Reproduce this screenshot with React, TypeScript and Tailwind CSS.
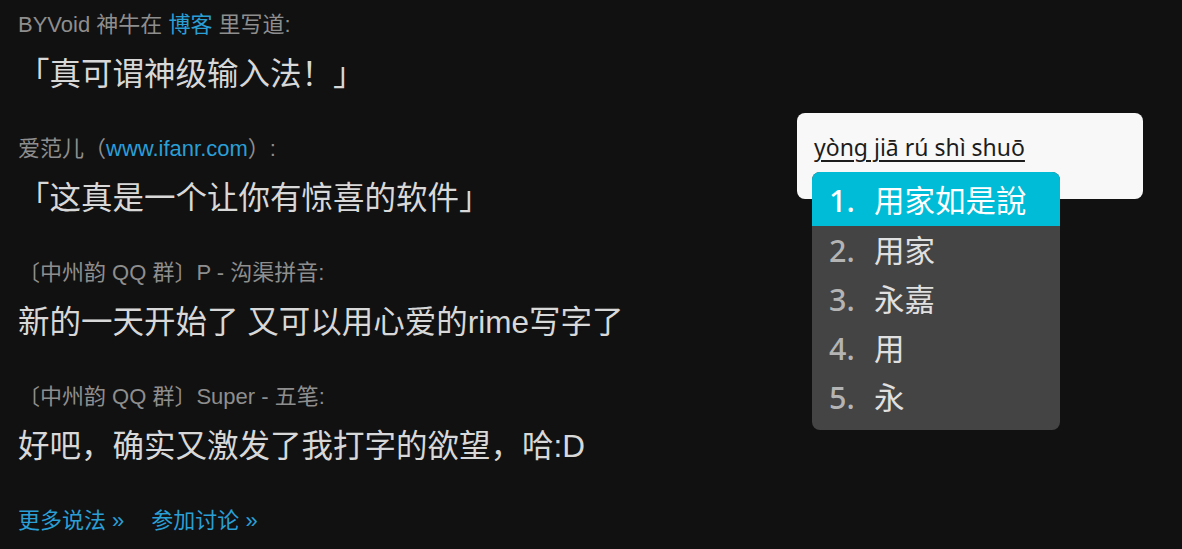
const quotes = [
  {
    meta: (
      <>
        BYVoid 神牛在 <span className="text-[#2a9fd6]">博客</span> 里写道:
      </>
    ),
    text: "「真可谓神级输入法！」",
  },
  {
    meta: (
      <>
        爱范儿（<span className="text-[#2a9fd6]">www.ifanr.com</span>）:
      </>
    ),
    text: "「这真是一个让你有惊喜的软件」",
  },
  { meta: <>〔中州韵 QQ 群〕P - 沟渠拼音:</>, text: "新的一天开始了 又可以用心爱的rime写字了" },
  { meta: <>〔中州韵 QQ 群〕Super - 五笔:</>, text: "好吧，确实又激发了我打字的欲望，哈:D" },
];

const candidates = ["用家如是說", "用家", "永嘉", "用", "永"];

const App = () => {
  return (
    <div className="w-[1182px] h-[549px] bg-[#111111] flex overflow-hidden font-['Liberation_Sans','Noto_Sans_CJK_SC',sans-serif]">
      <div className="w-[797px] pl-[18px] pt-[12px] flex flex-col gap-[42px]">
        {quotes.map((q, i) => (
          <div key={i} className="flex flex-col gap-[16px]">
            <div className="text-[22px] leading-[26px] text-[#8e8e8e]">{q.meta}</div>
            <div className="text-[31.5px] leading-[40px] text-[#d8d8d8]">{q.text}</div>
          </div>
        ))}
        <div className="flex gap-[27px] text-[22px] leading-[26px] text-[#2a9fd6]">
          <span>更多说法 »</span>
          <span>参加讨论 »</span>
        </div>
      </div>

      <div className="pt-[113px]">
        <div className="relative w-[346px] h-[86px] rounded-[8px] bg-[#f8f8f8] pl-[17px] pt-[19px]">
          <span className="font-['Noto_Sans',sans-serif] text-[23px] leading-[30px] text-[#1c1c1c] underline underline-offset-[4px] decoration-[1.5px]">
            yòng jiā rú shì shuō
          </span>
          <div className="absolute left-[15px] top-[59px] w-[248px] rounded-[8px] bg-[#444444] overflow-hidden pb-[8px] font-['Noto_Sans','Noto_Sans_CJK_SC',sans-serif]">
            {candidates.map((c, i) => (
              <div
                key={i}
                className={
                  i === 0
                    ? "flex items-center h-[54px] pl-[17px] bg-[#00bcd6] text-white text-[30.5px] pt-[4px]"
                    : "flex items-center h-[49px] pl-[17px] text-[#e0e0e0] text-[30.5px]"
                }
              >
                <span className={i === 0 ? "w-[45px] font-medium" : "w-[45px] text-[#b4b4b4] font-medium"}>
                  {i + 1}.
                </span>
                <span>{c}</span>
              </div>
            ))}
          </div>
        </div>
      </div>
    </div>
  );
};

export default App;
